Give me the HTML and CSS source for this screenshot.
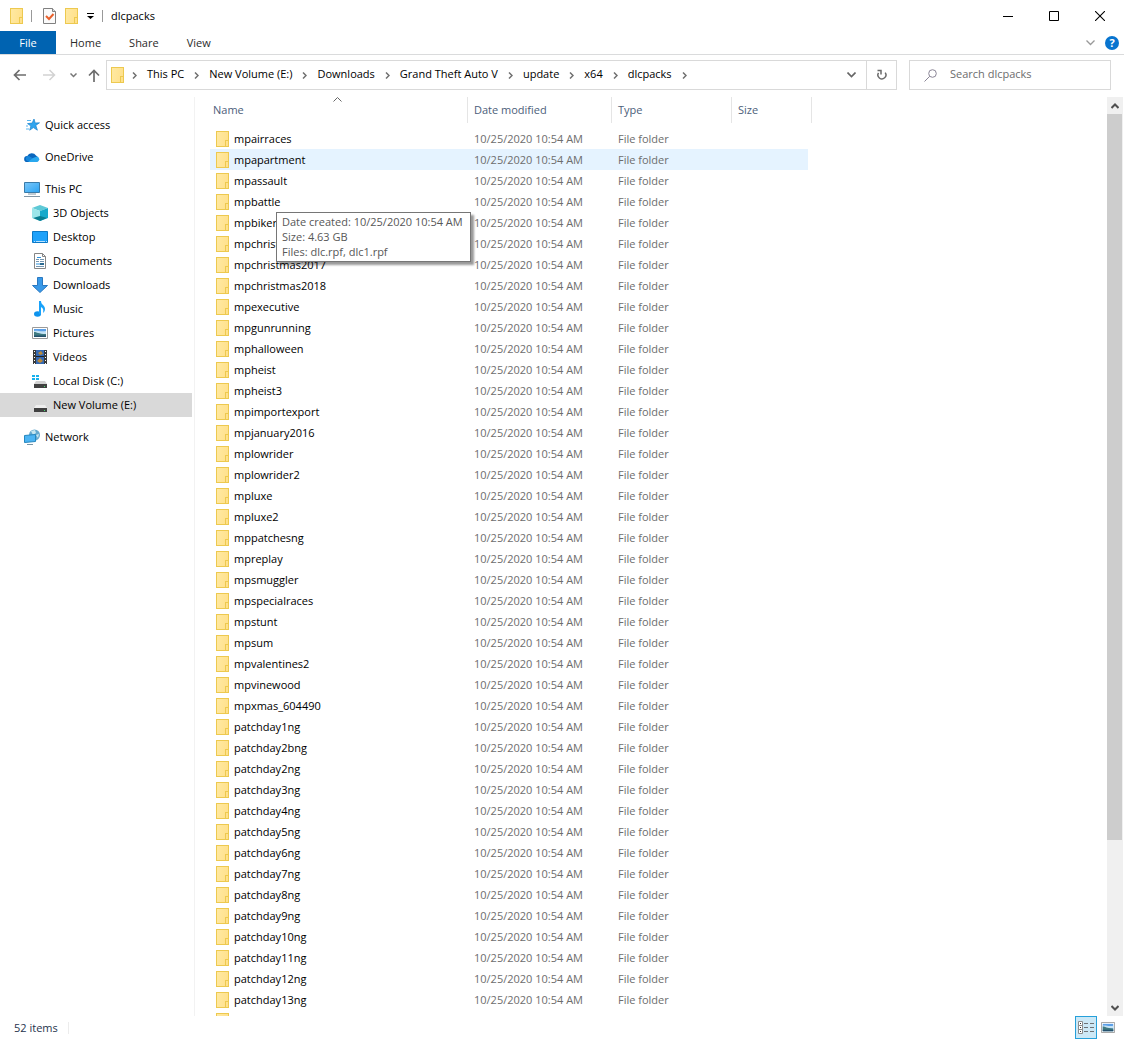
FILE: index.html
```html
<!DOCTYPE html>
<html lang="en">
<head>
<meta charset="utf-8">
<title>dlcpacks</title>
<link rel="stylesheet" href="styles.css">
</head>
<body>
<svg class="sprite" aria-hidden="true">
  <defs>
    <linearGradient id="sky" x1="0" y1="0" x2="1" y2="1"><stop offset="0" stop-color="#7cc7f8"/><stop offset="1" stop-color="#2aa3f3"/></linearGradient>
  </defs>
  <symbol id="crumb" viewBox="0 0 5 7"><path d="M1 0.5 4 3.5 1 6.5" fill="none" stroke="#707070" stroke-width="1.5"/></symbol>
  <symbol id="picture" viewBox="0 0 16 12"><path d="M.5.5h15v11H.5z" fill="#fff" stroke="#9a9a9a"/><path d="M2 2h12v8H2z" fill="#5b9fe8"/><path d="M2 4c3-1 6 1 12 0v3H2z" fill="#c4e2f4"/><path d="M2 5c3 0 4 2 12 2v3H2z" fill="#3f7a80"/><path d="M2 8.500h12V10H2z" fill="#24506c"/></symbol>
</svg>

<header class="titlebar">
  <span class="folder"></span>
  <span class="divider"></span>
  <button class="plain" aria-label="Properties"><svg width="13" height="16" viewBox="0 0 13 16"><path d="M.5.5h9l3 3v12H.5z" fill="#fafafa" stroke="#808080"/><path d="M9.500.5v3h3" fill="#ddd" stroke="#808080"/><path d="M3 8l3 3 4.500-5" fill="none" stroke="#e8602c" stroke-width="2"/></svg></button>
  <button class="plain" aria-label="New folder"><span class="folder"></span></button>
  <button class="plain" aria-label="Customize toolbar"><svg width="7" height="6" viewBox="0 0 7 6"><path d="M0 0h7v1H0zM0 3h7L3.500 6z" fill="#000"/></svg></button>
  <span class="divider"></span>
  <h1 class="title">dlcpacks</h1>
  <div class="window-buttons">
    <button aria-label="Minimize"><svg width="10" height="10"><path d="M0 5.500h10" stroke="#000"/></svg></button>
    <button aria-label="Maximize"><svg width="10" height="10"><path d="M.5.5h9v9h-9z" fill="none" stroke="#000"/></svg></button>
    <button aria-label="Close"><svg width="10" height="10"><path d="M0 0l10 10M10 0L0 10" stroke="#000" stroke-width="1.100"/></svg></button>
  </div>
</header>

<nav class="tabs" aria-label="Ribbon">
  <button class="tab file">File</button>
  <button class="tab">Home</button>
  <button class="tab">Share</button>
  <button class="tab">View</button>
  <div class="tabs-end">
    <button class="plain" aria-label="Expand ribbon"><svg width="9" height="6"><path d="M.5.5l4 4 4-4" fill="none" stroke="#999" stroke-width="1.300"/></svg></button>
    <button class="help" aria-label="Help">?</button>
  </div>
</nav>

<div class="location">
  <div class="history">
    <button class="plain" aria-label="Back"><svg width="13" height="12"><path d="M13 6H1.500M6.500 1l-5 5 5 5" fill="none" stroke="#6d6d6d" stroke-width="1.700"/></svg></button>
    <button class="plain" aria-label="Forward"><svg width="13" height="12"><path d="M0 6h11.500M6.500 1l5 5-5 5" fill="none" stroke="#d2d2d2" stroke-width="1.500"/></svg></button>
    <button class="plain recent" aria-label="Recent locations"><svg width="7" height="5"><path d="M.5.5l3 3 3-3" fill="none" stroke="#777" stroke-width="1.500"/></svg></button>
    <button class="plain" aria-label="Up"><svg width="12" height="13"><path d="M6 13V1.500M1 6.500l5-5 5 5" fill="none" stroke="#6d6d6d" stroke-width="1.700"/></svg></button>
  </div>
  <div class="address">
    <span class="folder"></span>
    <svg class="crumb"><use href="#crumb"/></svg><a href="#">This PC</a>
    <svg class="crumb"><use href="#crumb"/></svg><a href="#">New Volume (E:)</a>
    <svg class="crumb"><use href="#crumb"/></svg><a href="#">Downloads</a>
    <svg class="crumb"><use href="#crumb"/></svg><a href="#">Grand Theft Auto V</a>
    <svg class="crumb"><use href="#crumb"/></svg><a href="#">update</a>
    <svg class="crumb"><use href="#crumb"/></svg><a href="#">x64</a>
    <svg class="crumb"><use href="#crumb"/></svg><a href="#">dlcpacks</a>
    <svg class="crumb"><use href="#crumb"/></svg>
    <div class="address-end">
      <button class="plain drop" aria-label="Previous locations"><svg width="9" height="6"><path d="M.5.5l4 4 4-4" fill="none" stroke="#666" stroke-width="1.600"/></svg></button>
      <button class="refresh" aria-label="Refresh"><svg width="12" height="12"><path d="M9.200 3.600A4 4 0 1 1 2.500 3.800M1.500 1.500H5v4" fill="none" stroke="#6a6a6a" stroke-width="1.500"/></svg></button>
    </div>
  </div>
  <label class="search">
    <svg width="13" height="13"><circle cx="8.500" cy="4.500" r="3.800" fill="none" stroke="#8a8596"/><path d="M5.700 7.300L.5 12.500" stroke="#8a8596"/></svg>
    <input type="search" placeholder="Search dlcpacks" aria-label="Search dlcpacks">
  </label>
</div>

<div class="body">
  <nav class="tree" aria-label="Locations">
    <a href="#"><svg class="icon" viewBox="0 0 16 16"><path d="M10 2l1.200 4 4.300-.2-3.700 2.600 1.600 4.800-4-2.600-3.700 2.600 1.200-4.200L3.500 6.600l4.600-.5z" fill="#2fa4ee" stroke="#1b84cf" stroke-width=".7"/><path d="M3 3.500h4M2 9h2M2 12h3" stroke="#58b5ee"/></svg>Quick access</a>
    <a href="#"><svg class="icon" viewBox="0 0 16 16"><path d="M3 13a3 3 0 0 1 .3-6A5 5 0 0 1 12 6.500 4 4 0 0 1 13 13z" fill="#0a66bd"/><path d="M5 7l8 5h-10a3 3 0 0 1 .3-5z" fill="#1786db"/><path d="M4 13l5-4 4-1.500a2.800 2.800 0 0 1 0 5.500z" fill="#29a8ee"/></svg>OneDrive</a>
    <a href="#"><svg class="icon" viewBox="0 0 16 16"><path d="M.5 1.500h15v10H.5z" fill="url(#sky)" stroke="#397ba9"/><path d="M4 13h8M0 15.500h16" stroke="#8296a5"/></svg>This PC</a>
    <a class="child" href="#"><svg class="icon" viewBox="0 0 16 16"><path d="M0 3l8-3 8 3-8 3z" fill="#5ec9d6"/><path d="M0 3l8 3v10l-8-3z" fill="#9ce6ea"/><path d="M8 6l8-3v10l-8 3z" fill="#16a9cb"/><path d="M1 13l7-2 7 2-7 3z" fill="#087d91"/></svg>3D Objects</a>
    <a class="child" href="#"><svg class="icon" viewBox="0 0 16 16"><path d="M.5 2.500h15v11H.5z" fill="#1ea1fa" stroke="#0b79c7"/><path d="M2 12.500h1M4 12.500h9M14 12.500h1" stroke="#b9e3ff"/></svg>Desktop</a>
    <a class="child" href="#"><svg class="icon" viewBox="0 0 16 16"><path d="M2.500.5h8l3 3v12h-11z" fill="#fff" stroke="#858585"/><path d="M10.500.5v3h3" fill="none" stroke="#858585"/><path d="M4 6.500h3M8 6.500h4M4 8.500h3M8 8.500h4M4 13.500h8" stroke="#7596b0"/><path d="M5 4.500h4M4 11h4" stroke="#2f93dc"/><path d="M8 10h4v2H8z" fill="#2b6a91"/></svg>Documents</a>
    <a class="child" href="#"><svg class="icon" viewBox="0 0 16 16"><path d="M5.500.5h5v8h5L8 15.500.5 8.500h5z" fill="#3999e8" stroke="#2a78c0"/></svg>Downloads</a>
    <a class="child" href="#"><svg class="icon" viewBox="0 0 16 16"><ellipse cx="5.500" cy="13" rx="3.500" ry="2.700" fill="#0e93ed"/><path d="M7 0h2c0 4 4 4 4 8 0 2-1 3-2 4 1-4-.5-5-2-6v7H7z" fill="#18a2fa"/></svg>Music</a>
    <a class="child" href="#"><svg class="icon" viewBox="0 0 16 12"><use href="#picture"/></svg>Pictures</a>
    <a class="child" href="#"><svg class="icon" viewBox="0 0 16 16"><path d="M1 1h14v14H1z" fill="#383838"/><path d="M4 1h8v14H4z" fill="#3569b3"/><path d="M4 7.500h8" stroke="#222"/><path d="M6 4l3-2 2 3-3 1zM5 12l3-3 3 3-3 2z" fill="#bb8a3a"/><path d="M2.500 2v13M13.500 2v13" stroke="#fff" stroke-dasharray="1 2"/></svg>Videos</a>
    <a class="child" href="#"><svg class="icon" viewBox="0 0 16 16"><path d="M0 2h3v2H0zM4 2h3v2H4zM0 5h3v2H0zM4 5h3v2H4z" fill="#17b1ed"/><path d="M4 8h9l2 3H2z" fill="#d2d2d2"/><path d="M2 11h13v4H2z" fill="#414141"/><path d="M12 13.500h1" stroke="#46e06e"/></svg>Local Disk (C:)</a>
    <a class="child selected" href="#" aria-current="true"><svg class="icon" viewBox="0 0 16 16"><path d="M4 8h9l2 3H2z" fill="#eee"/><path d="M2 11h13v4H2z" fill="#414141"/><path d="M12 13.500h1" stroke="#46e06e"/></svg>New Volume (E:)</a>
    <a href="#"><svg class="icon" viewBox="0 0 16 16"><circle cx="10.500" cy="6" r="5.500" fill="#65a9cf"/><path d="M7 2l4-1 1 3-3 2zM12 6l3-1-1 4z" fill="#c6e6ef"/><path d="M.5 6.500l11-1v7l-11 1z" fill="#4cb4f3" stroke="#2587bf"/><path d="M3 15.500h6" stroke="#7894a5"/></svg>Network</a>
  </nav>

  <main class="files">
    <table>
      <colgroup><col class="c-name"><col class="c-date"><col class="c-type"><col class="c-size"></colgroup>
      <thead><tr><th aria-sort="ascending">Name<svg class="sort" width="9" height="5"><path d="M.5 4.500l4-4 4 4" fill="none" stroke="#666"/></svg></th><th>Date modified</th><th>Type</th><th>Size</th></tr></thead>
      <tbody>
        <tr><td>mpairraces</td><td>10/25/2020 10:54 AM</td><td>File folder</td><td></td></tr>
        <tr class="hovered"><td>mpapartment</td><td>10/25/2020 10:54 AM</td><td>File folder</td><td></td></tr>
        <tr><td>mpassault</td><td>10/25/2020 10:54 AM</td><td>File folder</td><td></td></tr>
        <tr><td>mpbattle</td><td>10/25/2020 10:54 AM</td><td>File folder</td><td></td></tr>
        <tr><td>mpbiker</td><td>10/25/2020 10:54 AM</td><td>File folder</td><td></td></tr>
        <tr><td>mpchristmas2</td><td>10/25/2020 10:54 AM</td><td>File folder</td><td></td></tr>
        <tr><td>mpchristmas2017</td><td>10/25/2020 10:54 AM</td><td>File folder</td><td></td></tr>
        <tr><td>mpchristmas2018</td><td>10/25/2020 10:54 AM</td><td>File folder</td><td></td></tr>
        <tr><td>mpexecutive</td><td>10/25/2020 10:54 AM</td><td>File folder</td><td></td></tr>
        <tr><td>mpgunrunning</td><td>10/25/2020 10:54 AM</td><td>File folder</td><td></td></tr>
        <tr><td>mphalloween</td><td>10/25/2020 10:54 AM</td><td>File folder</td><td></td></tr>
        <tr><td>mpheist</td><td>10/25/2020 10:54 AM</td><td>File folder</td><td></td></tr>
        <tr><td>mpheist3</td><td>10/25/2020 10:54 AM</td><td>File folder</td><td></td></tr>
        <tr><td>mpimportexport</td><td>10/25/2020 10:54 AM</td><td>File folder</td><td></td></tr>
        <tr><td>mpjanuary2016</td><td>10/25/2020 10:54 AM</td><td>File folder</td><td></td></tr>
        <tr><td>mplowrider</td><td>10/25/2020 10:54 AM</td><td>File folder</td><td></td></tr>
        <tr><td>mplowrider2</td><td>10/25/2020 10:54 AM</td><td>File folder</td><td></td></tr>
        <tr><td>mpluxe</td><td>10/25/2020 10:54 AM</td><td>File folder</td><td></td></tr>
        <tr><td>mpluxe2</td><td>10/25/2020 10:54 AM</td><td>File folder</td><td></td></tr>
        <tr><td>mppatchesng</td><td>10/25/2020 10:54 AM</td><td>File folder</td><td></td></tr>
        <tr><td>mpreplay</td><td>10/25/2020 10:54 AM</td><td>File folder</td><td></td></tr>
        <tr><td>mpsmuggler</td><td>10/25/2020 10:54 AM</td><td>File folder</td><td></td></tr>
        <tr><td>mpspecialraces</td><td>10/25/2020 10:54 AM</td><td>File folder</td><td></td></tr>
        <tr><td>mpstunt</td><td>10/25/2020 10:54 AM</td><td>File folder</td><td></td></tr>
        <tr><td>mpsum</td><td>10/25/2020 10:54 AM</td><td>File folder</td><td></td></tr>
        <tr><td>mpvalentines2</td><td>10/25/2020 10:54 AM</td><td>File folder</td><td></td></tr>
        <tr><td>mpvinewood</td><td>10/25/2020 10:54 AM</td><td>File folder</td><td></td></tr>
        <tr><td>mpxmas_604490</td><td>10/25/2020 10:54 AM</td><td>File folder</td><td></td></tr>
        <tr><td>patchday1ng</td><td>10/25/2020 10:54 AM</td><td>File folder</td><td></td></tr>
        <tr><td>patchday2bng</td><td>10/25/2020 10:54 AM</td><td>File folder</td><td></td></tr>
        <tr><td>patchday2ng</td><td>10/25/2020 10:54 AM</td><td>File folder</td><td></td></tr>
        <tr><td>patchday3ng</td><td>10/25/2020 10:54 AM</td><td>File folder</td><td></td></tr>
        <tr><td>patchday4ng</td><td>10/25/2020 10:54 AM</td><td>File folder</td><td></td></tr>
        <tr><td>patchday5ng</td><td>10/25/2020 10:54 AM</td><td>File folder</td><td></td></tr>
        <tr><td>patchday6ng</td><td>10/25/2020 10:54 AM</td><td>File folder</td><td></td></tr>
        <tr><td>patchday7ng</td><td>10/25/2020 10:54 AM</td><td>File folder</td><td></td></tr>
        <tr><td>patchday8ng</td><td>10/25/2020 10:54 AM</td><td>File folder</td><td></td></tr>
        <tr><td>patchday9ng</td><td>10/25/2020 10:54 AM</td><td>File folder</td><td></td></tr>
        <tr><td>patchday10ng</td><td>10/25/2020 10:54 AM</td><td>File folder</td><td></td></tr>
        <tr><td>patchday11ng</td><td>10/25/2020 10:54 AM</td><td>File folder</td><td></td></tr>
        <tr><td>patchday12ng</td><td>10/25/2020 10:54 AM</td><td>File folder</td><td></td></tr>
        <tr><td>patchday13ng</td><td>10/25/2020 10:54 AM</td><td>File folder</td><td></td></tr>
        <tr><td></td><td></td><td></td><td></td></tr>
      </tbody>
    </table>
    <div class="tooltip" role="tooltip">Date created: 10/25/2020 10:54 AM<br>Size: 4.63 GB<br>Files: dlc.rpf, dlc1.rpf</div>
  </main>

  <div class="scrollbar">
    <button aria-label="Scroll up"><svg width="8" height="6"><path d="M.5 5l3.500-3.500L7.500 5" fill="none" stroke="#505050" stroke-width="2"/></svg></button>
    <div class="track"><div class="thumb"></div></div>
    <button aria-label="Scroll down"><svg width="8" height="6"><path d="M.5 1L4 4.500 7.500 1" fill="none" stroke="#505050" stroke-width="2"/></svg></button>
  </div>
</div>

<footer class="status">
  <span class="count">52 items</span>
  <div class="views">
    <button class="active" aria-label="Details view"><svg width="16" height="13"><path d="M.5.5h4v4h-4zM.5 4.500h4v4h-4zM.5 8.500h4v4h-4z" fill="#fff" stroke="#8c8c8c"/><path d="M2 2.500h1M2 6.500h1M2 10.500h1" stroke="#333"/><path d="M6 2.500h4M12 2.500h4M6 6.500h4M12 6.500h4M6 10.500h4M12 10.500h4" stroke="#6e7377"/></svg></button>
    <button aria-label="Thumbnail view"><svg width="14" height="11" viewBox="0 0 16 12" preserveAspectRatio="none"><use href="#picture"/></svg></button>
  </div>
</footer>
</body>
</html>
```
FILE: styles.css
```css
* { box-sizing: border-box; }

body {
  margin: 0;
  height: 100vh;
  display: flex;
  flex-direction: column;
  overflow: hidden;
  background: #fff;
  color: #000;
  font: 11px/15px "Open Sans", "Noto Sans", sans-serif;
}

button {
  padding: 0;
  border: 0;
  background: none;
  color: inherit;
  font: inherit;
  display: flex;
  align-items: center;
  justify-content: center;
}

a { color: inherit; text-decoration: none; }
svg { display: block; flex: none; }
.sprite { position: absolute; width: 0; height: 0; }

.folder,
td:first-child::before {
  content: "";
  display: block;
  box-sizing: border-box;
  flex: none;
  width: 13px;
  height: 16px;
  border: 1px solid #edc94f;
  background:
    linear-gradient(#edc94f, #edc94f) right 2px bottom 0 / 1px 5px no-repeat,
    linear-gradient(#edc94f, #edc94f) right 0 bottom 5px / 3px 1px no-repeat,
    linear-gradient(100deg, #ffe9a2, #ffe08a);
}

/* Title bar */
.titlebar {
  display: flex;
  align-items: center;
  height: 31px;
  padding-left: 10px;
  gap: 8px;
}
.divider { width: 1px; height: 12px; background: #999; }
.titlebar .divider + .plain { margin-left: 3px; }
.titlebar .plain + .plain { margin-left: 1px; }
.title { margin: 0; font-size: 11px; font-weight: 400; }
.window-buttons { display: flex; margin-left: auto; padding-right: 1px; }
.window-buttons button { width: 46px; height: 31px; }

/* Ribbon tabs */
.tabs {
  display: flex;
  height: 24px;
  border-bottom: 1px solid #dadbdc;
  color: #2b2b2b;
}
.tab { padding: 0 14px; }
.file { width: 56px; background: #0063b1; color: #fff; }
.tabs-end { display: flex; align-items: center; gap: 10px; margin-left: auto; padding-right: 5px; }
.help {
  width: 14px;
  height: 14px;
  border-radius: 50%;
  background: #0874cf;
  color: #fff;
  font-weight: 700;
}

/* Address row */
.location {
  display: flex;
  align-items: center;
  height: 42px;
  padding: 0 13px 2px;
  line-height: 14px;
}
.history { display: flex; align-items: center; gap: 14px; width: 93px; }
.history button:nth-child(2) { margin-left: 3px; }
.history .recent { margin-right: -3px; }
.address {
  flex: 1;
  display: flex;
  align-items: center;
  height: 30px;
  border: 1px solid #d9d9d9;
  padding-left: 4px;
  gap: 10px;
}
.address a { padding-bottom: 2px; }
.address .folder { margin-right: -2px; }
.crumb { width: 5px; height: 7px; }
.address-end { display: flex; align-self: stretch; margin-left: auto; }
.drop { width: 30px; }
.refresh { width: 30px; border-left: 1px solid #d9d9d9; }
.search {
  display: flex;
  align-items: center;
  gap: 13px;
  width: 202px;
  height: 30px;
  margin-left: 12px;
  padding-left: 14px;
  border: 1px solid #d9d9d9;
}
.search input {
  flex: 1;
  min-width: 0;
  padding: 0 0 2px;
  border: 0;
  outline: 0;
  background: none;
  font: inherit;
}
.search input::placeholder { color: #6d6d6d; }

/* Folder tree */
.body { flex: 1; min-height: 0; display: flex; }
.tree { width: 195px; padding: 16px 2px 0 0; border-right: 1px solid #f2f2f2; line-height: 14px; }
.tree a {
  display: flex;
  align-items: center;
  gap: 5px;
  height: 24px;
  margin-bottom: 8px;
  padding: 0 0 1px 24px;
}
.tree a:nth-child(n+3):nth-child(-n+11) { margin-bottom: 0; }
.tree .child { padding-left: 32px; }
.tree .selected { background: #d9d9d9; }
.icon { width: 16px; height: 16px; }

/* File list */
.files { position: relative; flex: 1; min-width: 0; overflow: hidden; padding-left: 15px; }
table { border-collapse: separate; border-spacing: 0; table-layout: fixed; width: 602px; }
.c-name { width: 258px; }
.c-date { width: 144px; }
.c-type { width: 120px; }
.c-size { width: 80px; }
th {
  position: relative;
  height: 26px;
  padding: 0 6px 2px;
  border-right: 1px solid #e5e5e5;
  color: #4c607a;
  font-weight: 400;
  text-align: left;
}
th:first-child { padding-left: 3px; }
.sort { position: absolute; top: 0; left: 50%; margin-left: -6px; }
thead::after { content: ""; display: block; height: 5px; }
td { height: 21px; padding: 0 6px; color: #6d6d6d; white-space: nowrap; }
td:first-child { display: flex; align-items: center; gap: 5px; color: #000; }
.hovered td { background: #e5f3ff; }
.hovered td:last-child { background: linear-gradient(#e5f3ff, #e5f3ff) 0 0 / calc(100% - 4px) 100% no-repeat; }
.tooltip {
  position: absolute;
  left: 81px;
  top: 115px;
  width: 195px;
  padding: 1px 5px 2px;
  border: 1px solid #767676;
  background: #fff;
  box-shadow: 3px 3px 2px rgba(0, 0, 0, .4);
  color: #575757;
  white-space: nowrap;
}

/* Scroll bar */
.scrollbar { display: flex; flex-direction: column; width: 16px; margin-right: 1px; background: #f0f0f0; }
.scrollbar button { height: 17px; }
.track { flex: 1; }
.thumb { width: 15px; height: 82%; background: #cdcdcd; }

/* Status bar */
.status { display: flex; height: 24px; padding: 0 5px 0 14px; color: #26334d; }
.count { align-self: center; padding-right: 10px; border-right: 1px solid #ececec; line-height: 12px; }
.views { display: flex; margin-left: auto; }
.views button { width: 22px; height: 23px; }
.views .active { border: 1px solid #26a0da; background: #cce8f6; }
```
